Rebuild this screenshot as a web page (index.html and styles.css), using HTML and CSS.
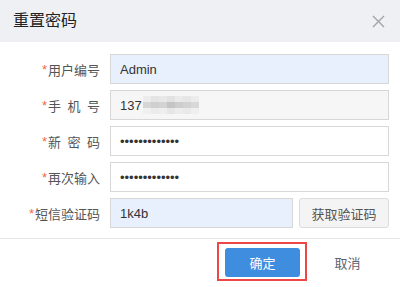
FILE: index.html
```html
<!DOCTYPE html>
<html lang="zh-CN">
<head>
<meta charset="utf-8">
<title>重置密码</title>
<link rel="stylesheet" href="styles.css">
</head>
<body>
<div class="dialog">
  <div class="header">
    <span class="title">重置密码</span>
    <span class="close" aria-label="关闭">
      <svg width="13" height="13" viewBox="0 0 13 13"><path d="M1 1L12 12M12 1L1 12" stroke="#a3a3a3" stroke-width="1.4" fill="none"/></svg>
    </span>
  </div>
  <form class="form">
    <label class="label"><span class="req">*</span>用户编号</label>
    <div class="field"><input class="input autofill" type="text" value="Admin"></div>

    <label class="label"><span class="req">*</span>手&ensp;机&ensp;号</label>
    <div class="field">
      <div class="input disabled">
        <span>137</span>
        <span class="mosaic">
          <i style="background:#ececec"></i><i style="background:#e4e4e4"></i><i style="background:#e8e8e8"></i><i style="background:#e2e2e2"></i><i style="background:#eaeaea"></i><i style="background:#e6e6e6"></i><i style="background:#ececec"></i>
          <i style="background:#d6d6d6"></i><i style="background:#cfcfcf"></i><i style="background:#d3d3d3"></i><i style="background:#c4c4c4"></i><i style="background:#cdcdcd"></i><i style="background:#d2d2d2"></i><i style="background:#d8d8d8"></i>
          <i style="background:#f0f0f0"></i><i style="background:#ebebeb"></i><i style="background:#eeeeee"></i><i style="background:#e6e6e6"></i><i style="background:#ececec"></i><i style="background:#e9e9e9"></i><i style="background:#efefef"></i>
        </span>
      </div>
    </div>

    <label class="label"><span class="req">*</span>新&ensp;密&ensp;码</label>
    <div class="field"><input class="input" type="password" value="abcdefghijklm"></div>

    <label class="label"><span class="req">*</span>再次输入</label>
    <div class="field"><input class="input" type="password" value="abcdefghijklm"></div>

    <label class="label"><span class="req">*</span>短信验证码</label>
    <div class="field code-row">
      <input class="input autofill" type="text" value="1k4b">
      <button type="button" class="btn-code">获取验证码</button>
    </div>
  </form>
  <div class="footer">
    <div class="confirm-wrap">
      <button type="button" class="btn-primary">确定</button>
      <span class="highlight"></span>
    </div>
    <button type="button" class="btn-text">取消</button>
  </div>
</div>
</body>
</html>
```

FILE: styles.css
```css
* { box-sizing: border-box; }
html, body { margin: 0; padding: 0; background: #fff; }
body {
  font-family: "Liberation Sans", "Noto Sans CJK SC", sans-serif;
  font-size: 13px;
  color: #333;
  width: 400px;
  height: 287px;
  overflow: hidden;
}
.dialog { width: 400px; }
.header {
  height: 42px;
  background: #eff0f3;
  display: flex;
  align-items: center;
  justify-content: space-between;
  padding: 0 15px 0 13px;
}
.title { font-size: 16px; color: #222; line-height: 1; }
.close { display: flex; width: 13px; height: 13px; }
.form {
  display: grid;
  grid-template-columns: 100px 1fr;
  column-gap: 10px;
  row-gap: 6px;
  grid-auto-rows: 30px;
  padding: 12px 11px 0 0;
}
.label {
  display: flex;
  align-items: center;
  justify-content: flex-end;
  color: #555;
  font-size: 13px;
  white-space: nowrap;
}
.req { color: #f06a3f; margin-right: 1px; font-family: "Liberation Sans", sans-serif; }
.field { display: flex; }
.input {
  width: 100%;
  height: 30px;
  border: 1px solid #d7d7d7;
  background: #fff;
  padding: 0 9px;
  font-family: "Liberation Sans", sans-serif;
  font-size: 13px;
  color: #333;
  outline: none;
  margin: 0;
  display: flex;
  align-items: center;
}
.autofill { background: #e8f0fe; }
.disabled { background: #f6f6f6; }
.mosaic {
  display: grid;
  grid-template-columns: repeat(7, 8px);
  grid-template-rows: repeat(3, 6px);
  margin-left: 1px;
}
.mosaic i { display: block; }
.code-row { gap: 6px; }
.code-row .input { flex: 1; }
.btn-code {
  flex: none;
  width: 90px;
  height: 30px;
  border: 1px solid #dcdcdc;
  border-radius: 3px;
  background: #f4f4f4;
  color: #555;
  font-family: "Noto Sans CJK SC", sans-serif;
  font-size: 13px;
  padding: 0;
}
.footer {
  margin-top: 10px;
  border-top: 1px solid #e6e6e6;
  display: flex;
  justify-content: flex-end;
  align-items: center;
  gap: 10px;
  padding: 9px 15px 0 0;
}
.confirm-wrap { position: relative; display: flex; }
.btn-primary {
  width: 75px;
  height: 29px;
  border: none;
  border-radius: 3px;
  background: #3f8ddf;
  color: #fff;
  font-family: "Noto Sans CJK SC", sans-serif;
  font-size: 13px;
  padding: 0;
}
.highlight {
  position: absolute;
  left: -8px;
  top: -6px;
  width: 90px;
  height: 39px;
  border: 2px solid #ef4747;
  pointer-events: none;
}
.btn-text {
  width: 75px;
  height: 29px;
  border: none;
  background: transparent;
  color: #5d6370;
  font-family: "Noto Sans CJK SC", sans-serif;
  font-size: 13px;
  padding: 0;
}
```
